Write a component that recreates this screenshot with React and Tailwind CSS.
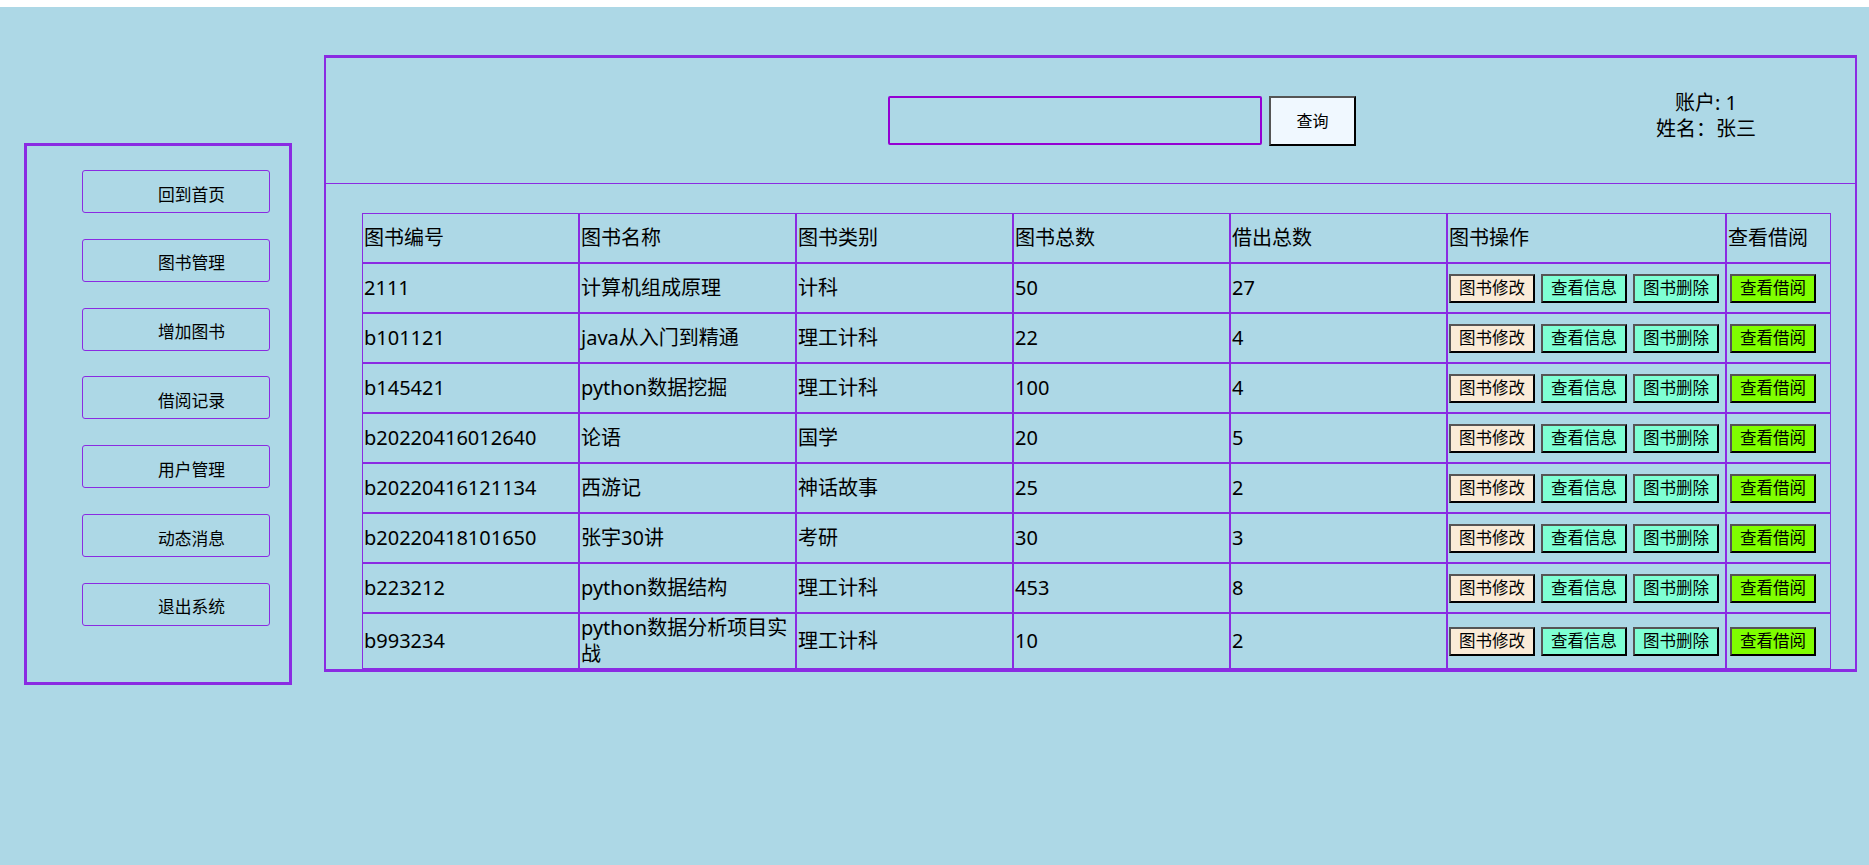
import React from "react";

const books = [
  ["2111", "计算机组成原理", "计科", "50", "27"],
  ["b101121", "java从入门到精通", "理工计科", "22", "4"],
  ["b145421", "python数据挖掘", "理工计科", "100", "4"],
  ["b20220416012640", "论语", "国学", "20", "5"],
  ["b20220416121134", "西游记", "神话故事", "25", "2"],
  ["b20220418101650", "张宇30讲", "考研", "30", "3"],
  ["b223212", "python数据结构", "理工计科", "453", "8"],
  ["b993234", "python数据分析项目实战", "理工计科", "10", "2"],
];

const menu = ["回到首页", "图书管理", "增加图书", "借阅记录", "用户管理", "动态消息", "退出系统"];

const cell = "border border-[#8a2be2] p-[1px] h-[50px] align-middle text-left font-normal";
const btn =
  "h-[29px] px-[8px] text-[16.5px] leading-none border-2 border-t-[#555] border-l-[#555] border-r-black border-b-black";

const Sidebar = () => (
  <div className="mt-[136px] w-[268px] h-[542px] border-[3px] border-[#8a2be2] pt-[24px] pl-[55px] flex flex-col gap-[25.8px]">
    {menu.map((m) => (
      <div
        key={m}
        className="w-[188px] h-[43px] border border-[#8a2be2] rounded-[3px] flex items-center pl-[75px] pt-[7px] text-[16.75px] leading-none"
      >
        {m}
      </div>
    ))}
  </div>
);

const Header = () => (
  <div className="h-[126px] border-b border-[#8a2be2] flex items-center">
    <input
      className="ml-[562px] w-[374px] h-[49px] border-2 border-[#9400d3] rounded-[2px] bg-transparent outline-none"
      type="text"
    />
    <button className="ml-[7px] w-[87px] h-[50px] bg-[#f0f8ff] text-[16px] border-2 border-t-[#555] border-l-[#555] border-r-black border-b-black">
      查询
    </button>
    <div className="ml-[280px] w-[140px] text-center text-[20px] leading-[26px] mb-[9px]">
      <div>账户: 1</div>
      <div>姓名：张三</div>
    </div>
  </div>
);

const BookTable = () => (
  <table className="table-fixed border-separate border-spacing-0 w-[1469px] text-[20px] leading-[26px]">
    <thead>
      <tr>
        <th className={`${cell} w-[217px]`}>图书编号</th>
        <th className={`${cell} w-[217px]`}>图书名称</th>
        <th className={`${cell} w-[217px]`}>图书类别</th>
        <th className={`${cell} w-[217px]`}>图书总数</th>
        <th className={`${cell} w-[217px]`}>借出总数</th>
        <th className={`${cell} w-[279px]`}>图书操作</th>
        <th className={`${cell} w-[105px]`}>查看借阅</th>
      </tr>
    </thead>
    <tbody>
      {books.map((b) => (
        <tr key={b[0]}>
          {b.map((v, i) => (
            <td key={i} className={cell}>
              {v}
            </td>
          ))}
          <td className={cell}>
            <div className="flex gap-[6px]">
              <button className={`${btn} bg-[#faebd7]`}>图书修改</button>
              <button className={`${btn} bg-[#7fffd4]`}>查看信息</button>
              <button className={`${btn} bg-[#7fffd4]`}>图书删除</button>
            </div>
          </td>
          <td className={cell}>
            <button className={`${btn} ml-[2px] bg-[#7fff00]`}>查看借阅</button>
          </td>
        </tr>
      ))}
    </tbody>
  </table>
);

export default function App() {
  return (
    <div className="bg-white pt-[7px] font-['Noto_Sans','Noto_Sans_CJK_SC',sans-serif] text-black">
      <div className="bg-[#add8e6] h-[858px] flex items-start pl-[24px]">
        <Sidebar />
        <div className="mt-[48px] ml-[32px] w-[1533px] border-t-[3px] border-x-2 border-b-[3px] border-[#8a2be2]">
          <Header />
          <div className="pl-[36px] pt-[29px]">
            <BookTable />
          </div>
        </div>
      </div>
    </div>
  );
}
